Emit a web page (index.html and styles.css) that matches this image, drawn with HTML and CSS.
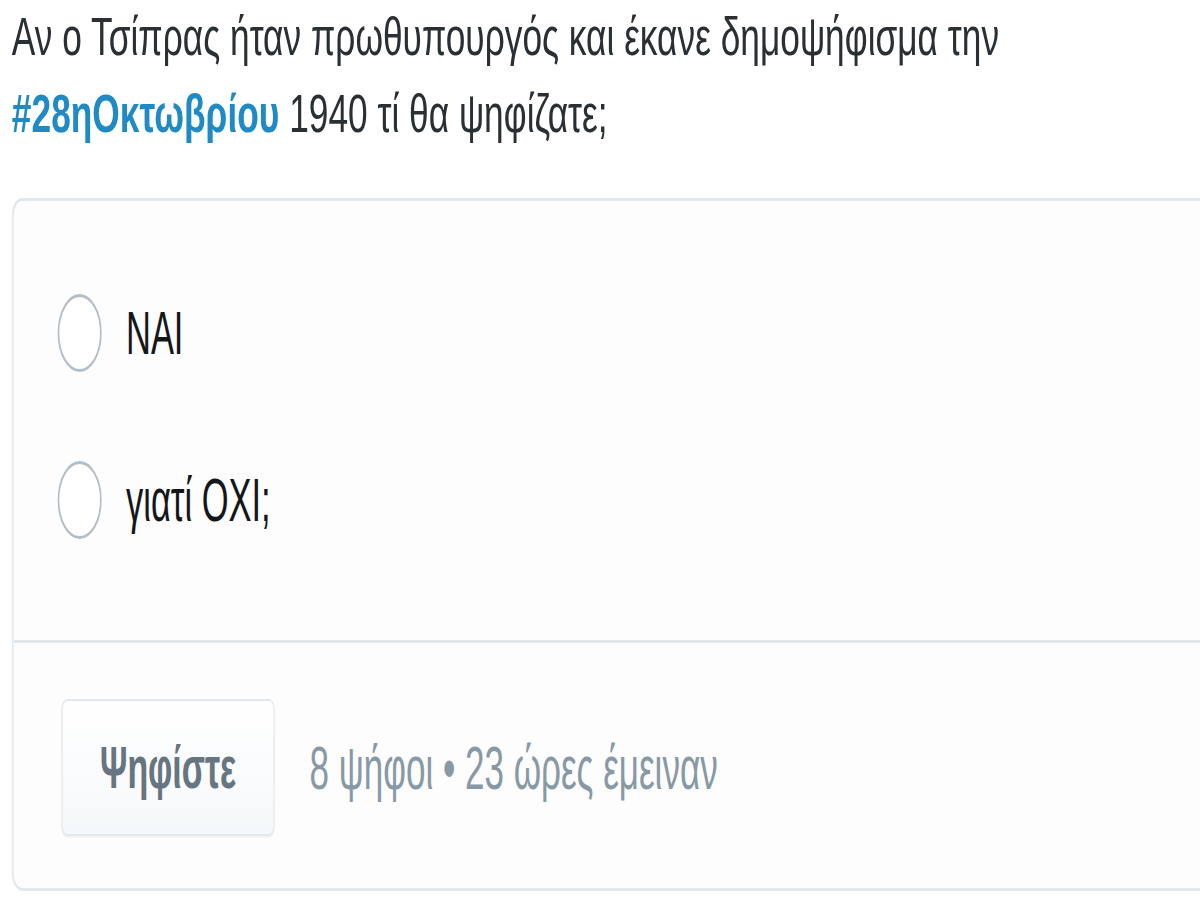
FILE: index.html
```html
<!DOCTYPE html>
<html lang="el">
  <head>
    <meta charset="utf-8" />
    <title>Δημοσκόπηση</title>
    <link rel="stylesheet" href="styles.css">
  </head>
  <body>
    <div class="page">
      <p class="tweet">
        Αν ο Τσίπρας ήταν πρωθυπουργός και έκανε δημοψήφισμα την<br />
        <a class="tag" href="#">#28ηΟκτωβρίου</a> 1940 τί θα ψηφίζατε;
      </p>

      <div class="poll">
        <div class="choices">
          <label class="choice"><span class="radio"></span>ΝΑΙ</label>
          <label class="choice"><span class="radio"></span>γιατί ΟΧΙ;</label>
        </div>
        <div class="poll-foot">
          <button class="vote">Ψηφίστε</button>
          <span class="meta">8 ψήφοι • 23 ώρες έμειναν</span>
        </div>
      </div>
    </div>
  </body>
</html>
```

FILE: styles.css
```css
* {
  padding: 0;
  margin: 0;
  box-sizing: border-box;
}
html,
body {
  overflow: hidden;
  background: #ffffff;
}
body {
  font-family: "Liberation Sans", Arial, sans-serif;
  color: #292f33;
}
/* the screenshot is squeezed sideways, so lay out wide and squeeze back */
.page {
  width: 2124px;
  padding-left: 21px;
  transform: scaleX(0.565);
  transform-origin: left top;
}
.tweet {
  font-size: 54px;
  line-height: 77px;
  margin-top: -2px;
  margin-bottom: 46px;
  white-space: nowrap;
  transform: scaleX(1.157);
  transform-origin: left top;
}
.tag {
  color: #1f8ac4;
  font-weight: bold;
  text-decoration: none;
}
.poll {
  width: 2200px;
  border: 3px solid #e1e8ed;
  border-radius: 18px;
  background: #fdfdfd;
}
.choices {
  padding: 93px 0 101px 78px;
  display: flex;
  flex-direction: column;
  gap: 89px;
}
.choice {
  display: flex;
  align-items: center;
  gap: 43px;
  height: 78px;
  font-size: 61px;
  color: #14171a;
}
.radio {
  width: 78px;
  height: 78px;
  border: 3px solid #b4bec6;
  border-radius: 50%;
  background: #ffffff;
}
.poll-foot {
  border-top: 3px solid #e1e8ed;
  padding: 56px 0 52px 85px;
  display: flex;
  align-items: center;
  gap: 62px;
}
.vote {
  width: 377px;
  height: 137px;
  font-family: "Liberation Sans", Arial, sans-serif;
  font-size: 60px;
  font-weight: bold;
  color: #66757f;
  background: linear-gradient(#ffffff, #f5f8fa);
  border: 2px solid #e1e8ed;
  border-radius: 10px;
  box-shadow: 0 2px 2px rgba(0, 0, 0, 0.04);
}
.meta {
  font-size: 62px;
  color: #8899a6;
}
```
